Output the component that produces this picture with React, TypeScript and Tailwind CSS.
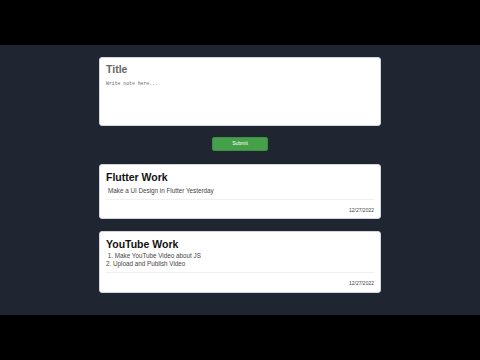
const notes = [
  {
    title: "Flutter Work",
    body: ["Make a UI Design in Flutter Yesterday"],
    date: "12/27/2022",
  },
  {
    title: "YouTube Work",
    body: [" 1. Make YouTube Video about JS", "2. Upload and Publish Video"],
    date: "12/27/2022",
  },
];

function NoteCard({ title, body, date }: { title: string; body: string[]; date: string }) {
  const isList = body.length > 1;
  return (
    <div
      className={`w-[282px] rounded-[3px] border border-gray-300 bg-white px-[6px] pt-[6px] ${
        isList ? "pb-[5px]" : "pb-[4px]"
      }`}
    >
      <h3 className="text-[10.5px] leading-[13px] font-bold text-[#111]">{title}</h3>
      {isList ? (
        <div className="mt-[1px] text-[6.3px] leading-[8px] text-[#444]">
          {body.map((line) => (
            <p key={line} className="whitespace-pre">
              {line}
            </p>
          ))}
        </div>
      ) : (
        <p className="mt-[2px] pl-[2px] text-[6.3px] leading-[9px] text-[#444]">{body[0]}</p>
      )}
      <div className="mt-[4px] border-t border-[#f0f0f0]" />
      <p className="mt-[7px] text-right text-[5px] leading-[7px] text-[#444]">{date}</p>
    </div>
  );
}

export default function App() {
  return (
    <div className="h-[360px] w-[480px] bg-black pt-[45px] font-['Liberation_Sans',Arial,sans-serif]">
      <div className="flex h-[270px] flex-col items-center bg-[#1f2531] pt-[12px]">
        <div className="h-[69px] w-[282px] rounded-[3px] border border-gray-300 bg-white px-[6px] pt-[4px]">
          <p className="text-[10.5px] leading-[14px] font-bold text-[#666]">Title</p>
          <p className="mt-[4px] font-['Liberation_Mono',monospace] text-[4.8px] leading-[7px] text-[#666]">
            Write note here...
          </p>
        </div>
        <button className="mt-[11px] flex h-[14px] w-[56px] items-center justify-center rounded-[2px] border border-[#3b8f3f] bg-[#45a049] text-[5px] text-white">
          Submit
        </button>
        <div className="mt-[13px] flex flex-col gap-[12px]">
          {notes.map((n) => (
            <NoteCard key={n.title} {...n} />
          ))}
        </div>
      </div>
    </div>
  );
}
